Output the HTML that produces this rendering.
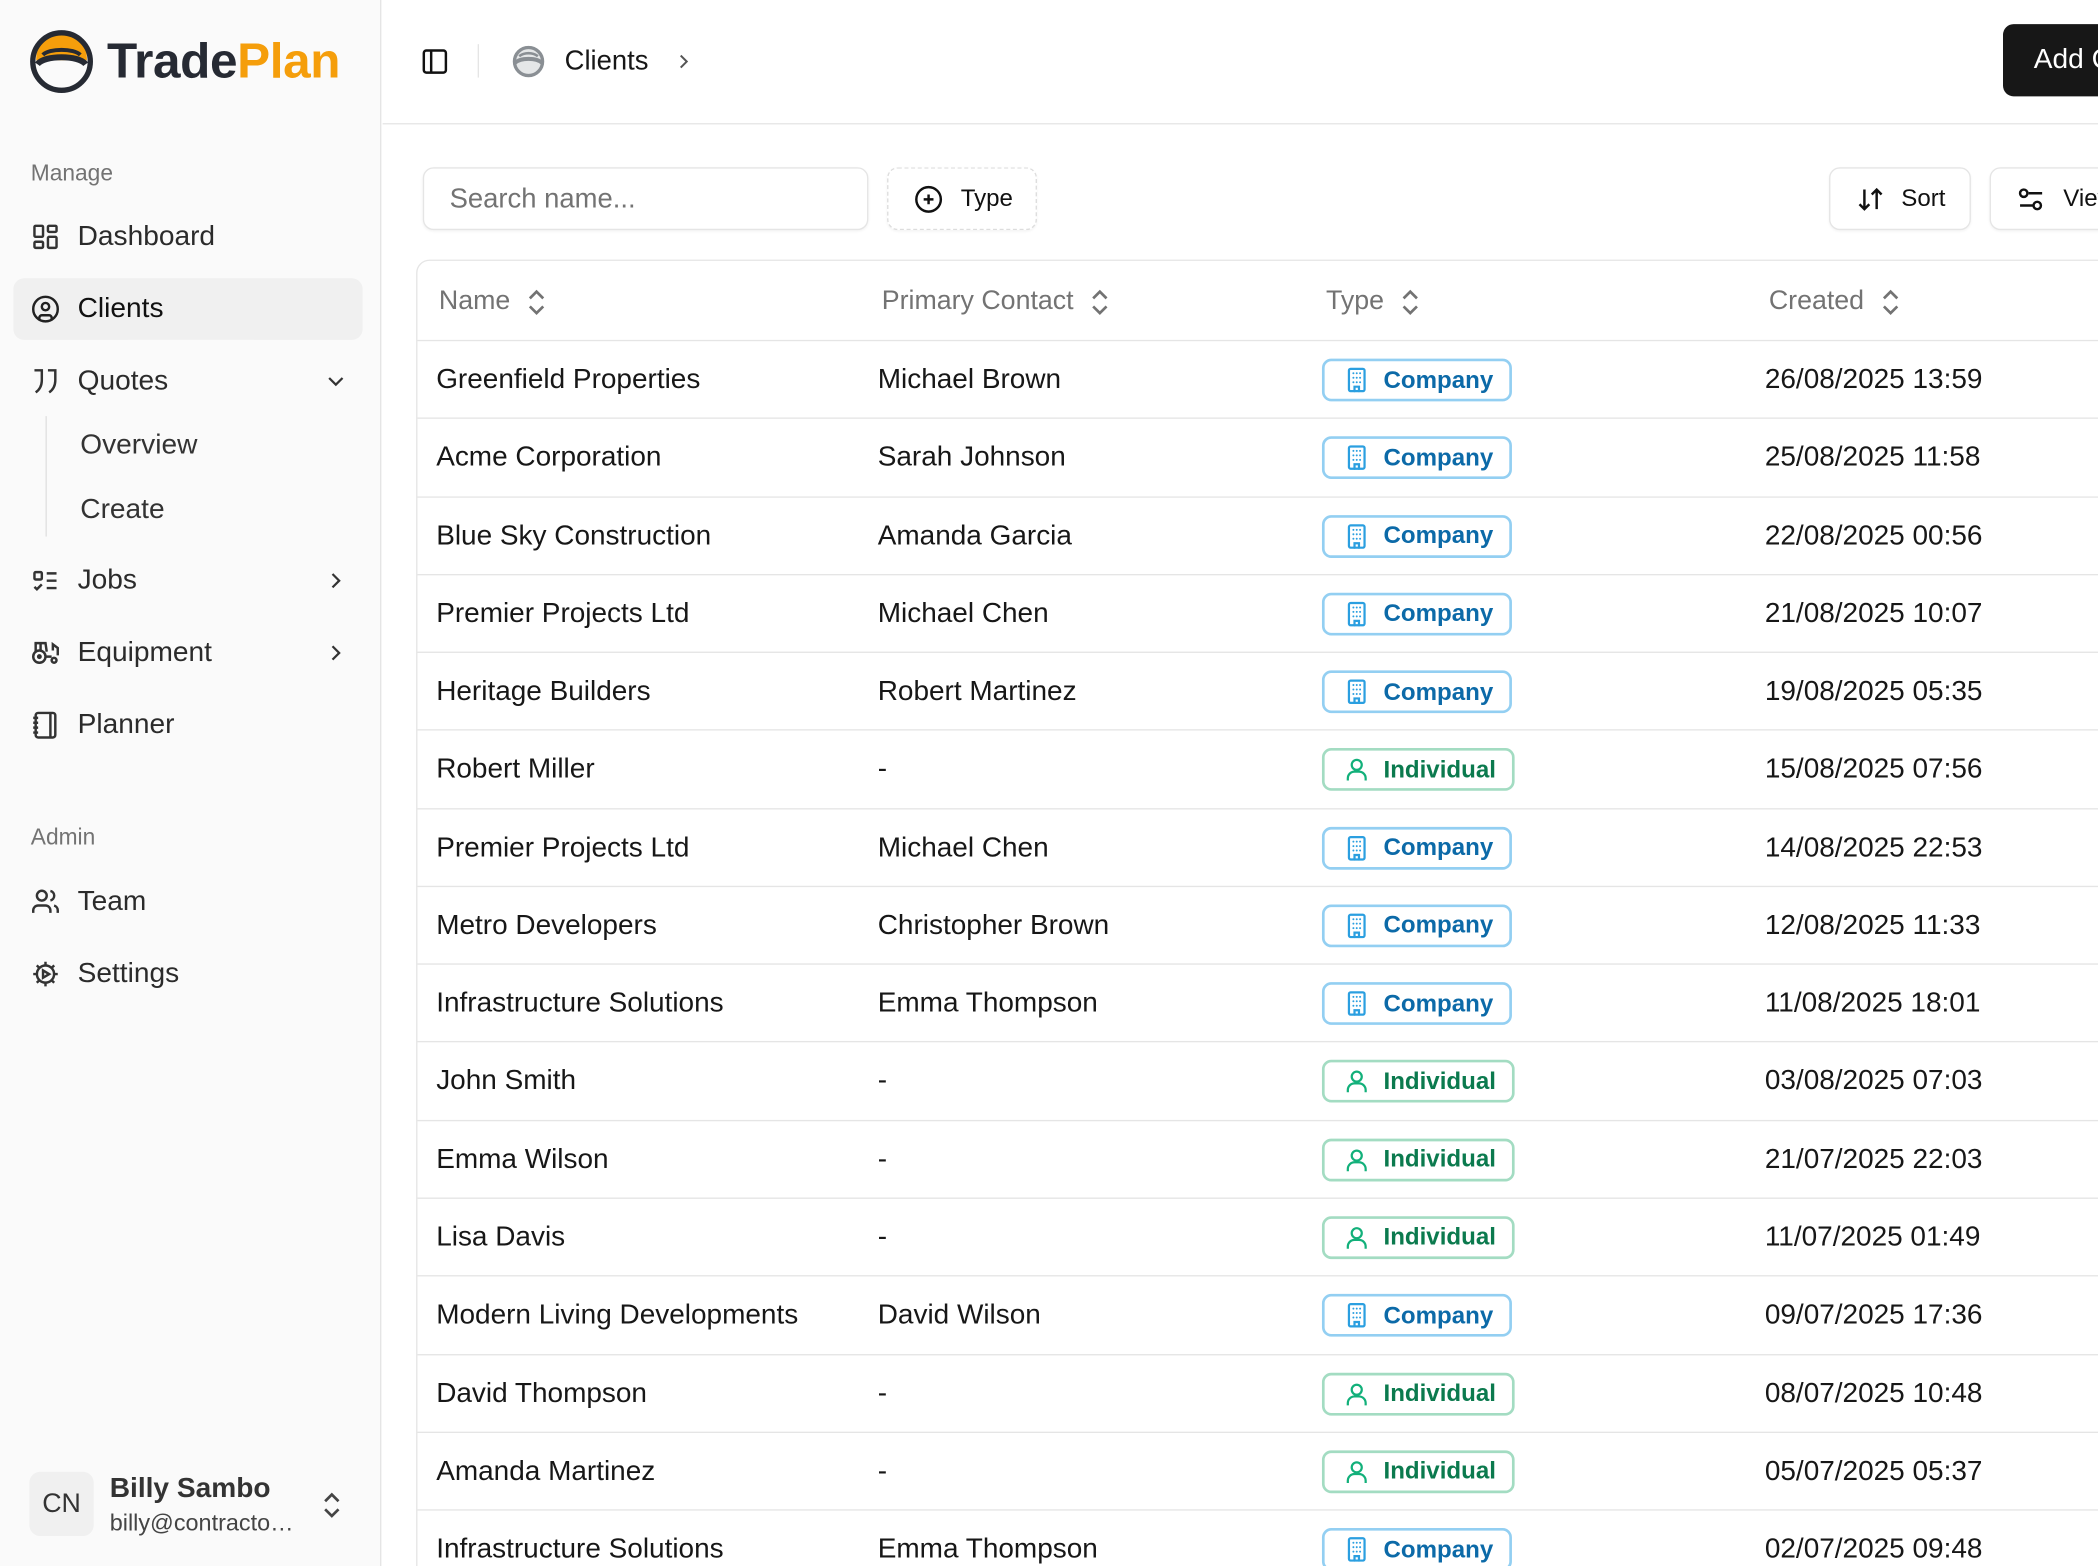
<!DOCTYPE html>
<html><head><meta charset="utf-8">
<style>
*{box-sizing:border-box;margin:0;padding:0}
html,body{width:2098px;height:1566px;overflow:hidden;background:#fff}
#w{width:1568px;height:1171px;transform:scale(1.33801);transform-origin:0 0;position:relative;font-family:"Liberation Sans",Arial,sans-serif;color:#171717;overflow:hidden}
.sb{position:absolute;left:0;top:0;width:285px;height:1171px;background:#fafafa;border-right:1px solid #e5e5e5}
.abs{position:absolute}
.lbl{position:absolute;left:23px;font-size:17px;color:#737373}
.it{position:absolute;left:10px;width:261px;height:46px;display:flex;align-items:center;font-size:21px;color:#2b2b2b;border-radius:8px}
.it svg{position:absolute;left:13px;width:22px;height:22px}
.it span{position:absolute;left:48px}
.it .ch{left:auto;right:10px;width:20px;height:20px}
.sub{position:absolute;left:60px;font-size:21px;color:#333}
.hdr{position:absolute;left:286px;top:0;right:0;height:93px;border-bottom:1px solid #e5e5e5}
.btn{position:absolute;height:47px;border:1px solid #e5e5e5;border-radius:8px;background:#fff;display:flex;align-items:center;font-size:18px;box-shadow:0 1px 2px rgba(0,0,0,.05);white-space:nowrap}
.tbl{position:absolute;left:311px;top:194px;width:1300px;height:1000px;border:1px solid #e5e5e5;border-radius:10px}
.th{position:absolute;top:214px;font-size:20px;color:#737373;display:flex;align-items:center}
.th svg{margin-left:12px}
.row{position:absolute;left:312px;width:1260px;height:58.27px;border-top:1px solid #e5e5e5}
.row .c{position:absolute;top:0;line-height:57px;font-size:20.9px;color:#171717;white-space:nowrap}
.bd{position:absolute;left:676px;top:13px;height:32px;border-radius:7px;border:2px solid #93cff2;display:flex;align-items:center;font-size:18px;font-weight:bold;color:#0c6aa8;padding:0 12px 0 14px}
.bd svg{margin-right:10px}
.bd.ind{border-color:#a3dcc2;color:#0b7a4e}
</style></head><body><div id="w">
<div class="sb">
 <svg class="abs" style="left:21px;top:21px" width="50" height="50" viewBox="0 0 50 50">
  <path d="M6 24 C6 10 14 4 25 4 C36 4 44 10 44 24 Z" fill="#f59e0b"/>
  <circle cx="25" cy="25" r="21.5" fill="none" stroke="#262a33" stroke-width="4"/>
  <path d="M7 27 C12 20 38 20 43 27" fill="none" stroke="#262a33" stroke-width="4.5"/>
  <path d="M11 20 C16 15 34 15 39 20" fill="none" stroke="#262a33" stroke-width="3"/>
 </svg>
 <div class="abs" style="left:80px;top:25px;font-size:37px;font-weight:bold;letter-spacing:-0.3px"><span style="color:#262a33">Trade</span><span style="color:#f59e0b">Plan</span></div>
 <div class="lbl" style="top:120px">Manage</div>
 <div class="it" style="top:154px"><svg viewBox="0 0 24 24" fill="none" stroke="#333" stroke-width="2"><rect x="3" y="3" width="7" height="9" rx="1"/><rect x="14" y="3" width="7" height="5" rx="1"/><rect x="14" y="12" width="7" height="9" rx="1"/><rect x="3" y="16" width="7" height="5" rx="1"/></svg><span>Dashboard</span></div>
 <div class="it" style="top:208px;background:#f0f0f0"><svg viewBox="0 0 24 24" fill="none" stroke="#222" stroke-width="2"><circle cx="12" cy="12" r="10"/><circle cx="12" cy="10" r="3"/><path d="M7 20.7v-1.7a2 2 0 0 1 2-2h6a2 2 0 0 1 2 2v1.7"/></svg><span style="color:#111">Clients</span></div>
 <div class="it" style="top:262px"><svg viewBox="0 0 24 24" fill="none" stroke="#333" stroke-width="2"><path d="M3 3h6v8c0 5-2 8-5 10"/><path d="M14 3h6v8c0 5-2 8-5 10"/></svg><span>Quotes</span><svg class="ch" viewBox="0 0 24 24" fill="none" stroke="#333" stroke-width="2"><path d="m6 9 6 6 6-6"/></svg></div>
 <div class="abs" style="left:34px;top:311px;width:1px;height:90px;background:#e0e0e0"></div>
 <div class="sub" style="top:321px">Overview</div>
 <div class="sub" style="top:369px">Create</div>
 <div class="it" style="top:411px"><svg viewBox="0 0 24 24" fill="none" stroke="#333" stroke-width="2"><rect x="3" y="5" width="6" height="6" rx="1"/><path d="m3 17 2 2 4-4"/><path d="M13 6h8M13 12h8M13 18h8"/></svg><span>Jobs</span><svg class="ch" viewBox="0 0 24 24" fill="none" stroke="#333" stroke-width="2"><path d="m9 18 6-6-6-6"/></svg></div>
 <div class="it" style="top:465px"><svg viewBox="0 0 24 24" fill="none" stroke="#333" stroke-width="2"><path d="M3 4h9l1 7"/><path d="M4 11V4"/><path d="M8 10V4"/><circle cx="7" cy="15" r="5"/><circle cx="7" cy="15" r="1"/><circle cx="19" cy="18" r="2"/><path d="M12 15h5M18 10V5l4 3v6"/></svg><span>Equipment</span><svg class="ch" viewBox="0 0 24 24" fill="none" stroke="#333" stroke-width="2"><path d="m9 18 6-6-6-6"/></svg></div>
 <div class="it" style="top:519px"><svg viewBox="0 0 24 24" fill="none" stroke="#333" stroke-width="2"><path d="M2 6h4M2 10h4M2 14h4M2 18h4"/><rect x="4" y="2" width="16" height="20" rx="2"/><path d="M16 2v20"/></svg><span>Planner</span></div>
 <div class="lbl" style="top:616px">Admin</div>
 <div class="it" style="top:651px"><svg viewBox="0 0 24 24" fill="none" stroke="#333" stroke-width="2"><path d="M16 21v-2a4 4 0 0 0-4-4H6a4 4 0 0 0-4 4v2"/><circle cx="9" cy="7" r="4"/><path d="M22 21v-2a4 4 0 0 0-3-3.9M16 3.1a4 4 0 0 1 0 7.8"/></svg><span>Team</span></div>
 <div class="it" style="top:705px"><svg viewBox="0 0 24 24" fill="none" stroke="#333" stroke-width="2"><circle cx="12" cy="12" r="7"/><path d="M12 2v3M12 19v3M2 12h3M19 12h3M4.9 4.9l2.1 2.1M17 17l2.1 2.1M4.9 19.1 7 17M17 7l2.1-2.1"/><path d="M10 9l5 3-5 3z"/></svg><span>Settings</span></div>
 <div class="abs" style="left:22px;top:1100px;width:48px;height:48px;border-radius:8px;background:#f0f0f0;font-size:20px;color:#333;display:flex;align-items:center;justify-content:center">CN</div>
 <div class="abs" style="left:82px;top:1101px;font-size:21px;font-weight:bold;color:#333">Billy Sambo</div>
 <div class="abs" style="left:82px;top:1128px;font-size:17.5px;color:#444">billy@contracto…</div>
 <svg class="abs" style="left:239px;top:1114px" width="18" height="22" viewBox="0 0 18 22" fill="none" stroke="#444" stroke-width="2"><path d="m4 8 5-5 5 5M4 14l5 5 5-5"/></svg>
</div>

<div class="hdr">
 <svg class="abs" style="left:28px;top:35px" width="22" height="22" viewBox="0 0 24 24" fill="none" stroke="#111" stroke-width="2"><rect x="3" y="3" width="18" height="18" rx="2"/><path d="M9 3v18"/></svg>
 <div class="abs" style="left:71px;top:33px;width:1px;height:25px;background:#e5e5e5"></div>
 <svg class="abs" style="left:97px;top:33px" width="24" height="26" viewBox="0 0 24 26"><circle cx="12" cy="13" r="10.5" fill="#e5e7e8" stroke="#8a8f94" stroke-width="2.5"/><path d="M2 14c4-4 16-4 20 0" fill="none" stroke="#8a8f94" stroke-width="3"/><path d="M5 9c4-3 10-3 14 0" fill="none" stroke="#8a8f94" stroke-width="2"/></svg>
 <div class="abs" style="left:136px;top:34px;font-size:20.5px;color:#171717">Clients</div>
 <svg class="abs" style="left:216px;top:36px" width="18" height="20" viewBox="0 0 24 24" fill="none" stroke="#555" stroke-width="2"><path d="m9 18 6-6-6-6"/></svg>
 <div class="abs" style="left:1211px;top:18px;width:120px;height:54px;background:#171717;border-radius:8px;color:#fff;font-size:21px;padding:15px 0 0 23px;white-space:nowrap">Add Client</div>
</div>

<div class="btn" style="left:316px;top:125px;width:333px;color:#737373;font-size:20.5px;padding-left:19px">Search name...</div>
<div class="btn" style="left:663px;top:125px;width:112px;border:1.5px dashed #ddd;padding-left:19px;color:#111"><svg width="22" height="22" viewBox="0 0 24 24" fill="none" stroke="#111" stroke-width="2"><circle cx="12" cy="12" r="10"/><path d="M8 12h8M12 8v8"/></svg><span style="margin-left:13px">Type</span></div>
<div class="btn" style="left:1367px;top:125px;width:106px;padding-left:19px;color:#111"><svg width="22" height="22" viewBox="0 0 24 24" fill="none" stroke="#111" stroke-width="2"><path d="m3 16 4 4 4-4M7 20V4M21 8l-4-4-4 4M17 4v16"/></svg><span style="margin-left:12px">Sort</span></div>
<div class="btn" style="left:1487px;top:125px;width:120px;padding-left:19px;color:#111"><svg width="22" height="22" viewBox="0 0 24 24" fill="none" stroke="#111" stroke-width="2"><path d="M10 7h11M3 17h11"/><circle cx="6" cy="7" r="3"/><circle cx="17" cy="17" r="3"/></svg><span style="margin-left:13px">View</span></div>

<div class="tbl"></div>
<svg width="0" height="0" style="position:absolute"><defs>
<symbol id="bld" viewBox="0 0 24 24"><g fill="none" stroke-width="2" stroke-linecap="round"><rect x="5" y="2" width="14" height="20" rx="1.5"/><path d="M10 22v-4h4v4"/><path d="M9 6h.01M12 6h.01M15 6h.01M9 10h.01M12 10h.01M15 10h.01M9 14h.01M12 14h.01M15 14h.01" stroke-width="1.8"/></g></symbol>
<symbol id="usr" viewBox="0 0 24 24"><g fill="none" stroke-width="2"><circle cx="12" cy="8" r="4.5"/><path d="M4 22v-2a6 6 0 0 1 6-6h4a6 6 0 0 1 6 6v2"/></g></symbol>
</defs></svg>
<div class="th" style="left:328px">Name<svg width="16" height="20" viewBox="0 0 16 20" fill="none" stroke="#737373" stroke-width="2"><path d="m3 7 5-5 5 5M3 13l5 5 5-5"/></svg></div>
<div class="th" style="left:659px">Primary Contact<svg width="16" height="20" viewBox="0 0 16 20" fill="none" stroke="#737373" stroke-width="2"><path d="m3 7 5-5 5 5M3 13l5 5 5-5"/></svg></div>
<div class="th" style="left:991px">Type<svg width="16" height="20" viewBox="0 0 16 20" fill="none" stroke="#737373" stroke-width="2"><path d="m3 7 5-5 5 5M3 13l5 5 5-5"/></svg></div>
<div class="th" style="left:1322px">Created<svg width="16" height="20" viewBox="0 0 16 20" fill="none" stroke="#737373" stroke-width="2"><path d="m3 7 5-5 5 5M3 13l5 5 5-5"/></svg></div>

<div id="rows"></div>
<script>
var d=[["Greenfield Properties","Michael Brown",1,"26/08/2025 13:59"],["Acme Corporation","Sarah Johnson",1,"25/08/2025 11:58"],["Blue Sky Construction","Amanda Garcia",1,"22/08/2025 00:56"],["Premier Projects Ltd","Michael Chen",1,"21/08/2025 10:07"],["Heritage Builders","Robert Martinez",1,"19/08/2025 05:35"],["Robert Miller","-",0,"15/08/2025 07:56"],["Premier Projects Ltd","Michael Chen",1,"14/08/2025 22:53"],["Metro Developers","Christopher Brown",1,"12/08/2025 11:33"],["Infrastructure Solutions","Emma Thompson",1,"11/08/2025 18:01"],["John Smith","-",0,"03/08/2025 07:03"],["Emma Wilson","-",0,"21/07/2025 22:03"],["Lisa Davis","-",0,"11/07/2025 01:49"],["Modern Living Developments","David Wilson",1,"09/07/2025 17:36"],["David Thompson","-",0,"08/07/2025 10:48"],["Amanda Martinez","-",0,"05/07/2025 05:37"],["Infrastructure Solutions","Emma Thompson",1,"02/07/2025 09:48"]];
var h="";d.forEach(function(r,i){var t=254+i*58.27;
var b=r[2]?'<div class="bd"><svg width="20" height="20" style="stroke:#2b9fe0"><use href="#bld"/></svg>Company</div>':'<div class="bd ind"><svg width="20" height="20" style="stroke:#12b07a"><use href="#usr"/></svg>Individual</div>';
h+='<div class="row" style="top:'+t+'px"><div class="c" style="left:14px">'+r[0]+'</div><div class="c" style="left:344px">'+r[1]+'</div>'+b+'<div class="c" style="left:1007px">'+r[3]+'</div></div>';});
document.getElementById("rows").innerHTML=h;
</script>
</div></body></html>
